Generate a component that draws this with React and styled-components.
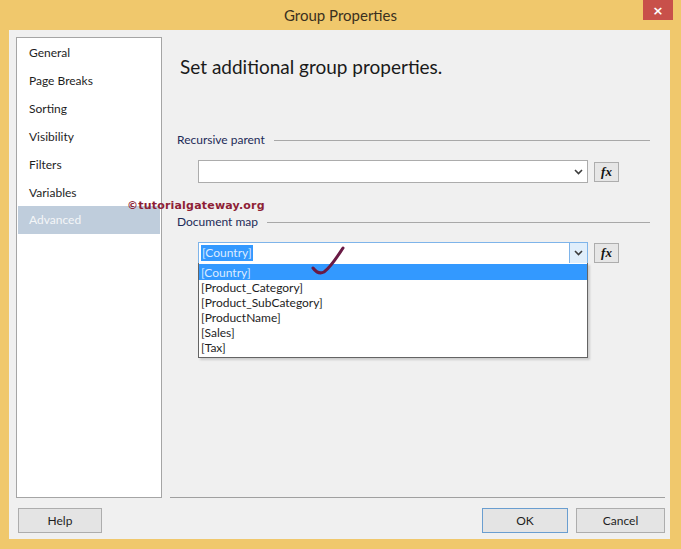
import React from 'react';
import styled, { createGlobalStyle } from 'styled-components';

const Global = createGlobalStyle`
  html, body {
    margin: 0;
    padding: 0;
    background: #f0c86c;
  }
  body {
    font-family: Lato, "Noto Sans", sans-serif;
    font-size: 12px;
    color: #1e1e1e;
  }
`;

const Window = styled.div`
  width: 681px;
  height: 549px;
  display: flex;
  flex-direction: column;
  background: #f0c86c;
  box-sizing: border-box;
  position: relative;
`;

const TitleBar = styled.div`
  height: 30px;
  display: flex;
  align-items: center;
  justify-content: center;
  position: relative;
  font-size: 15px;
  color: #3a3020;
`;

const CloseButton = styled.div`
  position: absolute;
  top: 0;
  right: 8px;
  width: 30px;
  height: 20px;
  background: #c8504a;
  display: flex;
  align-items: center;
  justify-content: center;
  color: #fff;
  font-size: 13px;
  font-weight: bold;
  font-family: "DejaVu Sans", sans-serif;
`;

const Client = styled.div`
  margin: 0 11px 10px 9px;
  flex: 1;
  background: #f0f0f0;
  display: flex;
  flex-direction: column;
  padding: 7px 5px 0 7px;
`;

const Main = styled.div`
  display: flex;
  gap: 8px;
  height: 461px;
`;

const Sidebar = styled.div`
  width: 146px;
  box-sizing: border-box;
  background: #fff;
  border: 1px solid #a5a5a5;
  padding: 1px 1px 0;
`;

const NavItem = styled.div`
  height: 28px;
  line-height: 28px;
  padding-left: 11px;
  color: ${p => (p.active ? '#f4f6f8' : '#1e1e1e')};
  background: ${p => (p.active ? '#bfcddc' : 'transparent')};
  margin-top: ${p => (p.active ? '-1px' : '0')};
`;

const Content = styled.div`
  flex: 1;
  border-bottom: 1px solid #a0a0a0;
  position: relative;
`;

const Heading = styled.div`
  font-size: 19px;
  line-height: 22px;
  color: #1a1a1a;
  margin: 19px 0 0 10px;
`;

const GroupLabel = styled.div`
  display: flex;
  align-items: center;
  gap: 9px;
  margin: ${p => p.mt}px 15px 0 7px;
  line-height: 16px;
  color: #1d2b58;
  &::after {
    content: '';
    flex: 1;
    height: 1px;
    background: #a8a8a8;
  }
`;

const FieldRow = styled.div`
  display: flex;
  align-items: center;
  gap: 6px;
  margin: ${p => p.mt}px 0 0 28px;
  position: relative;
`;

const Combo = styled.div`
  width: 390px;
  height: ${p => p.h}px;
  box-sizing: border-box;
  background: #fff;
  border: 1px solid ${p => (p.focused ? '#7eb4ea' : '#acacac')};
  display: flex;
  align-items: center;
  padding-left: 2px;
`;

const ComboText = styled.span`
  flex: 1;
  display: flex;
  align-items: center;
`;

const Selected = styled.span`
  background: #3399ff;
  color: #dcebff;
  padding: 0 1px;
  line-height: 16px;
`;

const ArrowBox = styled.div`
  width: 17px;
  height: 100%;
  display: flex;
  align-items: center;
  justify-content: center;
  background: ${p => (p.hot ? '#e0eefb' : 'transparent')};
  border-left: 1px solid ${p => (p.hot ? '#7eb4ea' : 'transparent')};
`;

const FxButton = styled.div`
  width: 25px;
  height: 20px;
  box-sizing: border-box;
  border: 1px solid #adadad;
  background: #e6e6e6;
  display: flex;
  align-items: center;
  justify-content: center;
  font-family: "Liberation Serif", serif;
  font-style: italic;
  font-weight: bold;
  font-size: 13px;
  color: #111;
`;

const DropList = styled.div`
  position: absolute;
  top: 21px;
  left: 0;
  width: 390px;
  box-sizing: border-box;
  background: #fff;
  border: 1px solid #646464;
  border-top: none;
  padding-bottom: 2px;
  z-index: 2;
  box-shadow: 2px 2px 2px rgba(0, 0, 0, 0.15);
`;

const DropItem = styled.div`
  height: ${p => (p.active ? 16 : 15)}px;
  line-height: ${p => (p.active ? 17 : 16)}px;
  padding-left: 2px;
  background: ${p => (p.active ? '#3399ff' : 'transparent')};
  color: ${p => (p.active ? '#dcebff' : '#1e1e1e')};
  margin-top: ${p => (p.active ? '1px' : '0')};
`;

const Watermark = styled.div`
  position: absolute;
  left: -43px;
  top: 162px;
  font-family: "DejaVu Sans", sans-serif;
  font-weight: bold;
  font-size: 11px;
  color: #8e1f36;
  letter-spacing: 0.2px;
  z-index: 3;
`;

const Check = styled.svg`
  position: absolute;
  left: 113px;
  top: 3px;
  z-index: 4;
`;

const Footer = styled.div`
  display: flex;
  align-items: center;
  padding-top: 10px;
  padding-left: 2px;
  gap: 8px;
`;

const Button = styled.div`
  width: ${p => p.w}px;
  height: 25px;
  box-sizing: border-box;
  border: 1px solid ${p => (p.primary ? '#6a9ed0' : '#adadad')};
  background: #e4e4e4;
  display: flex;
  align-items: center;
  justify-content: center;
  color: #1e1e1e;
  margin-left: ${p => (p.push ? 'auto' : '0')};
`;

const Chevron = () => (
  <svg width="9" height="6" viewBox="0 0 9 6">
    <path d="M1 1 L4.5 4.5 L8 1" fill="none" stroke="#3c3c3c" strokeWidth="1.6" />
  </svg>
);

const navItems = ['General', 'Page Breaks', 'Sorting', 'Visibility', 'Filters', 'Variables', 'Advanced'];
const fields = ['[Country]', '[Product_Category]', '[Product_SubCategory]', '[ProductName]', '[Sales]', '[Tax]'];

export default function App() {
  return (
    <>
      <Global />
      <Window>
        <TitleBar>
          Group Properties
          <CloseButton>×</CloseButton>
        </TitleBar>
        <Client>
          <Main>
            <Sidebar>
              {navItems.map(n => (
                <NavItem key={n} active={n === 'Advanced'}>{n}</NavItem>
              ))}
            </Sidebar>
            <Content>
              <Watermark>©tutorialgateway.org</Watermark>
              <Heading>Set additional group properties.</Heading>
              <GroupLabel mt={54}>Recursive parent</GroupLabel>
              <FieldRow mt={12}>
                <Combo h={23}>
                  <ComboText />
                  <ArrowBox><Chevron /></ArrowBox>
                </Combo>
                <FxButton>fx</FxButton>
              </FieldRow>
              <GroupLabel mt={31}>Document map</GroupLabel>
              <FieldRow mt={12}>
                <Combo h={22} focused>
                  <ComboText><Selected>[Country]</Selected></ComboText>
                  <ArrowBox hot><Chevron /></ArrowBox>
                </Combo>
                <FxButton>fx</FxButton>
                <DropList>
                  {fields.map((f, i) => (
                    <DropItem key={f} active={i === 0}>{f}</DropItem>
                  ))}
                </DropList>
                <Check width="36" height="32" viewBox="0 0 36 32">
                  <path
                    d="M2 23 C5 27 9 29 13 27 C20 22 26 12 32 3"
                    fill="none"
                    stroke="#6a1a45"
                    strokeWidth="3"
                    strokeLinecap="round"
                  />
                </Check>
              </FieldRow>
            </Content>
          </Main>
          <Footer>
            <Button w={84}>Help</Button>
            <Button w={86} push primary>OK</Button>
            <Button w={89}>Cancel</Button>
          </Footer>
        </Client>
      </Window>
    </>
  );
}
